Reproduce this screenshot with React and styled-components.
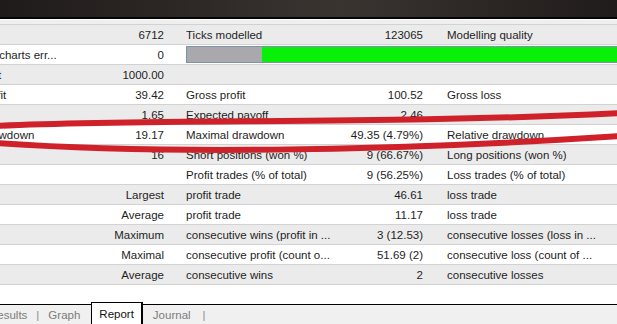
import styled, { createGlobalStyle } from "styled-components";

const GlobalStyle = createGlobalStyle`
  html, body {
    margin: 0;
    padding: 0;
    background: #ffffff;
  }
  body {
    width: 617px;
    height: 324px;
    overflow: hidden;
    font-family: "Liberation Sans", Arial, sans-serif;
  }
`;

const Screen = styled.div`
  position: relative;
  width: 617px;
  height: 324px;
  display: flex;
  flex-direction: column;
  overflow: hidden;
  background: #ffffff;
`;

const TitleStrip = styled.div`
  height: 17px;
  flex: 0 0 auto;
  background: linear-gradient(
    90deg,
    #1f1b1a 0%,
    #2d2826 30%,
    #3a3431 55%,
    #2e2927 75%,
    #201c1b 100%
  );
  border-bottom: 2px solid #050505;
  box-shadow: 0 1px 0 #ffffff;
  margin-bottom: 1px;
`;

const ReportArea = styled.div`
  flex: 1 1 auto;
  overflow: hidden;
  background: #ffffff;
`;

const Grid = styled.div`
  width: 687px;
  margin-left: -70px;
  display: grid;
  grid-template-columns: 130px 112px 178px 81px 1fr;
  font-size: 11.5px;
  color: #1e1e1e;
`;

const Sliver = styled.div`
  grid-column: 1 / -1;
  height: 4px;
  background: #efefef;
  border-bottom: 1px solid #d2d2d2;
`;

const Row = styled.div`
  grid-column: 1 / -1;
  display: grid;
  grid-template-columns: subgrid;
  height: 19px;
  border-bottom: 1px solid #d2d2d2;
  background: ${(p) => (p.$shaded ? "#ebebeb" : "#ffffff")};
`;

const Cell = styled.div`
  display: flex;
  align-items: center;
  justify-content: ${(p) => (p.$num ? "flex-end" : "flex-start")};
  padding: ${(p) => (p.$num ? "0 8px 0 0" : `0 0 0 ${p.$pad || 4}px`)};
  white-space: nowrap;
  overflow: hidden;
`;

const BarCell = styled.div`
  grid-column: 3 / -1;
  display: flex;
  align-items: center;
  padding-left: 14px;
`;

const QualityBar = styled.div`
  flex: 1;
  height: 15px;
  display: flex;
  border: 1px solid #7d93aa;
  border-right: none;
`;

const BarFill = styled.div`
  width: ${(p) => p.$w}px;
  flex: ${(p) => (p.$w ? "0 0 auto" : "1")};
  background: ${(p) => p.$color};
`;

const Spacer = styled.div`
  flex: 1;
`;

const TabBar = styled.div`
  flex: 0 0 19px;
  display: flex;
  align-items: stretch;
  background: #f0f0f0;
  border-top: 1px solid #000000;
  margin-left: -11px;
  font-size: 11.5px;
`;

const Tab = styled.div`
  display: flex;
  align-items: center;
  padding: 0 ${(p) => (p.$active ? "7px" : "0")};
  color: ${(p) => (p.$active ? "#111111" : "#7c7c7c")};
  background: ${(p) => (p.$active ? "#ffffff" : "transparent")};
  border: ${(p) => (p.$active ? "1px solid #000000" : "none")};
  border-right-width: ${(p) => (p.$active ? "2px" : "0")};
  border-bottom: none;
  margin-top: ${(p) => (p.$active ? "-3px" : "0")};
  margin-right: ${(p) => p.$mr || 0}px;
  margin-left: ${(p) => p.$ml || 0}px;
`;

const TabSep = styled.span`
  color: #8a8a8a;
  display: flex;
  align-items: center;
  margin: 0 ${(p) => p.$gap || 8}px;
`;

const Annotation = styled.svg`
  position: absolute;
  left: 0;
  top: 0;
  pointer-events: none;
`;

const rows = [
  ["Bars in test", "6712", "Ticks modelled", "123065", "Modelling quality"],
  ["Mismatched charts err...", "0", null],
  ["Initial deposit", "1000.00", "", "", ""],
  ["Total net profit", "39.42", "Gross profit", "100.52", "Gross loss"],
  ["Profit factor", "1.65", "Expected payoff", "2.46", ""],
  ["Absolute drawdown", "19.17", "Maximal drawdown", "49.35 (4.79%)", "Relative drawdown"],
  ["Total trades", "16", "Short positions (won %)", "9 (66.67%)", "Long positions (won %)"],
  ["", "", "Profit trades (% of total)", "9 (56.25%)", "Loss trades (% of total)"],
  ["", "Largest", "profit trade", "46.61", "loss trade"],
  ["", "Average", "profit trade", "11.17", "loss trade"],
  ["", "Maximum", "consecutive wins (profit in ...", "3 (12.53)", "consecutive losses (loss in ..."],
  ["", "Maximal", "consecutive profit (count o...", "51.69 (2)", "consecutive loss (count of ..."],
  ["", "Average", "consecutive wins", "2", "consecutive losses"],
];

function App() {
  return (
    <>
      <GlobalStyle />
      <Screen>
        <TitleStrip />
        <ReportArea>
          <Grid>
            <Sliver />
            {rows.map((r, idx) => (
              <Row key={idx} $shaded={idx % 2 === 0}>
                <Cell>{r[0]}</Cell>
                <Cell $num>{r[1]}</Cell>
                {r[2] === null ? (
                  <BarCell>
                    <QualityBar>
                      <BarFill $w={75} $color="#a9a8ad" />
                      <BarFill $color="#08f008" />
                    </QualityBar>
                  </BarCell>
                ) : (
                  <>
                    <Cell $pad={14}>{r[2]}</Cell>
                    <Cell $num>{r[3]}</Cell>
                    <Cell $pad={16}>{r[4]}</Cell>
                  </>
                )}
              </Row>
            ))}
          </Grid>
        </ReportArea>
        <TabBar>
          <Tab>Results</Tab>
          <TabSep $gap={9}>|</TabSep>
          <Tab $mr={11}>Graph</Tab>
          <Tab $active>Report</Tab>
          <Tab $ml={10}>Journal</Tab>
          <TabSep $gap={12}>|</TabSep>
          <Spacer />
        </TabBar>
        <Annotation width="617" height="324" viewBox="0 0 617 324">
          <path
            d="M -5 126 C 150 118, 380 125, 622 113"
            fill="none"
            stroke="#cf2129"
            strokeWidth="6"
            strokeLinecap="round"
          />
          <path
            d="M -5 143 C 150 154, 380 152, 622 136"
            fill="none"
            stroke="#cf2129"
            strokeWidth="6"
            strokeLinecap="round"
          />
        </Annotation>
      </Screen>
    </>
  );
}

export default App;
